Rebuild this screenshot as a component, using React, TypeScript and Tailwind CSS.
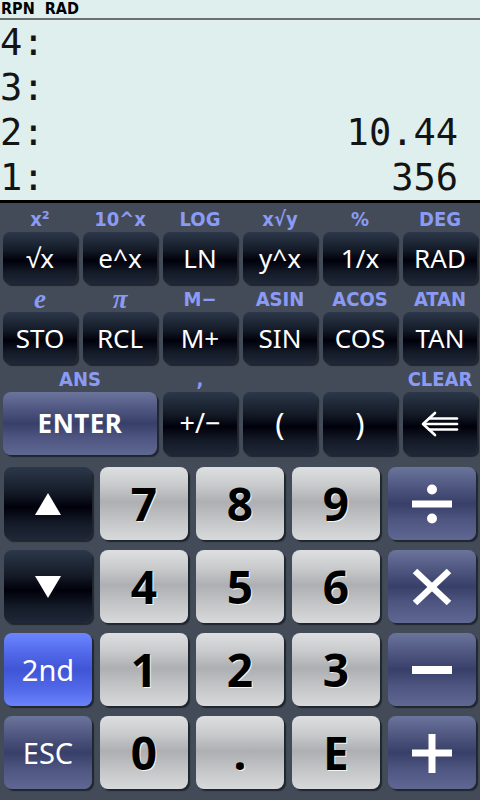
import React from 'react';

const stack = [
  ['4', ''],
  ['3', ''],
  ['2', '10.44'],
  ['1', '356'],
];

const darkKey =
  "bg-[linear-gradient(to_bottom,#2c384a_0%,#141b27_35%,#00000a_55%,#141b28_78%,#1f2838_100%)] text-white shadow-[2px_2px_1px_rgba(10,14,20,0.6)]";
const blueKey =
  "bg-[linear-gradient(to_bottom,#6b749b_0%,#4c547e_30%,#384069_50%,#4d5580_72%,#5f6892_100%)] text-white shadow-[2px_2px_1px_rgba(10,14,20,0.6)]";
const lightKey =
  "bg-[linear-gradient(to_bottom,#dedfe1_0%,#c8cacc_25%,#adafb2_48%,#c4c6c8_75%,#d8d9db_100%)] text-black shadow-[2px_2px_1px_rgba(10,14,20,0.6)]";
const secondKey =
  "bg-[linear-gradient(to_bottom,#6c86ff_0%,#5168ea_28%,#3f55d5_50%,#5068e8_75%,#6a82fa_100%)] text-white shadow-[2px_2px_1px_rgba(10,14,20,0.6)]";

const labelFont = "font-['DejaVu_Sans_Condensed','DejaVu_Sans',sans-serif]";
const keyFont = "font-['Noto_Sans','Open_Sans',sans-serif]";

const fnRows = [
  [
    { label: 'x²', key: '√x' },
    { label: '10^x', key: 'e^x' },
    { label: 'LOG', key: 'LN' },
    { label: 'x√y', key: 'y^x' },
    { label: '%', key: '1/x' },
    { label: 'DEG', key: 'RAD' },
  ],
  [
    { label: 'e', key: 'STO', serif: true },
    { label: 'π', key: 'RCL', serif: true },
    { label: 'M−', key: 'M+' },
    { label: 'ASIN', key: 'SIN' },
    { label: 'ACOS', key: 'COS' },
    { label: 'ATAN', key: 'TAN' },
  ],
];

function Label({ text, serif, first }: { text: string; serif?: boolean; first?: boolean }) {
  return (
    <div className={`${first ? 'h-[29px]' : 'h-[28px]'} flex items-end justify-center pb-[3px]`}>
      {serif ? (
        <span className="text-[27px] leading-[20px] font-bold italic text-[#8b9bf5] font-['Liberation_Serif','DejaVu_Serif',serif]">
          {text}
        </span>
      ) : (
        <span className={`text-[20px] leading-[19px] font-bold text-[#8b9bf5] ${labelFont}`}>{text}</span>
      )}
    </div>
  );
}

function Triangle({ down }: { down?: boolean }) {
  return (
    <svg width="26" height="24" viewBox="0 0 26 24">
      <polygon points={down ? '0,1 26,1 13,23' : '13,1 26,23 0,23'} fill="white" />
    </svg>
  );
}

function OpIcon({ op }: { op: string }) {
  return (
    <svg width="44" height="44" viewBox="-22 -22 44 44" fill="white" stroke="white">
      {op === 'div' && (
        <>
          <rect x="-20" y="-3.5" width="40" height="7" stroke="none" />
          <circle cx="0" cy="-14.5" r="5" stroke="none" />
          <circle cx="0" cy="14.5" r="5" stroke="none" />
        </>
      )}
      {op === 'mul' && (
        <>
          <line x1="-17" y1="-16" x2="17" y2="16" strokeWidth="6.5" />
          <line x1="17" y1="-16" x2="-17" y2="16" strokeWidth="6.5" />
        </>
      )}
      {op === 'sub' && <rect x="-20" y="-4" width="40" height="8" stroke="none" />}
      {op === 'add' && (
        <>
          <rect x="-20" y="-3.5" width="40" height="7" stroke="none" />
          <rect x="-3.5" y="-19" width="7" height="39" stroke="none" />
        </>
      )}
    </svg>
  );
}

function BackArrow() {
  return (
    <svg width="38" height="26" viewBox="0 0 38 26" fill="none" stroke="white" strokeWidth="2.6" strokeLinecap="round">
      <polyline points="14,2 2,13 14,24" strokeLinejoin="round" />
      <line x1="8" y1="7.5" x2="36" y2="7.5" />
      <line x1="4" y1="13" x2="36" y2="13" />
      <line x1="8" y1="18.5" x2="36" y2="18.5" />
    </svg>
  );
}

type NumKey = { kind: 'dark' | 'light' | 'blue' | 'second'; content: React.ReactNode };

const numRows: NumKey[][] = [
  [
    { kind: 'dark', content: <Triangle /> },
    { kind: 'light', content: '7' },
    { kind: 'light', content: '8' },
    { kind: 'light', content: '9' },
    { kind: 'blue', content: <OpIcon op="div" /> },
  ],
  [
    { kind: 'dark', content: <Triangle down /> },
    { kind: 'light', content: '4' },
    { kind: 'light', content: '5' },
    { kind: 'light', content: '6' },
    { kind: 'blue', content: <OpIcon op="mul" /> },
  ],
  [
    { kind: 'second', content: '2nd' },
    { kind: 'light', content: '1' },
    { kind: 'light', content: '2' },
    { kind: 'light', content: '3' },
    { kind: 'blue', content: <OpIcon op="sub" /> },
  ],
  [
    { kind: 'blue', content: 'ESC' },
    { kind: 'light', content: '0' },
    { kind: 'light', content: '.' },
    { kind: 'light', content: 'E' },
    { kind: 'blue', content: <OpIcon op="add" /> },
  ],
];

const kindClass = {
  dark: darkKey,
  light: lightKey,
  blue: blueKey,
  second: secondKey,
};

export default function App() {
  return (
    <div className="w-[480px] h-[800px] overflow-hidden flex flex-col bg-[#424b57]">
      {/* status line */}
      <div className={`h-[20px] shrink-0 bg-[#dfefee] border-b-2 border-[#6e6e6e] pl-[1px] text-[16px] leading-[18px] font-bold text-black ${labelFont}`}>
        RPN&nbsp;&nbsp;RAD
      </div>

      {/* stack display */}
      <div className="shrink-0 bg-[#dfefee] border-b-[3px] border-black font-['DejaVu_Sans_Mono','Liberation_Mono',monospace] text-[37px] leading-[45px] text-[#141414]">
        {stack.map(([n, v]) => (
          <div key={n} className="h-[45px] flex justify-between pr-[22px]">
            <span>{n}:</span>
            <span>{v}</span>
          </div>
        ))}
      </div>

      {/* function keys */}
      <div className="flex flex-col">
        {fnRows.map((row, r) => (
          <div key={r} className="grid grid-cols-6">
            {row.map((k) => (
              <div key={k.key} className="flex flex-col">
                <Label text={k.label} serif={k.serif} first={r === 0} />
                <div className="px-[3px]">
                  <button className={`w-full h-[52px] rounded-[7px] flex items-center justify-center text-[26px] ${keyFont} ${darkKey}`}>
                    {k.key}
                  </button>
                </div>
              </div>
            ))}
          </div>
        ))}

        <div className="grid grid-cols-6">
          <div className="col-span-2 flex flex-col">
            <Label text="ANS" />
            <div className="px-[3px]">
              <button className={`w-full h-[63px] rounded-[8px] flex items-center justify-center text-[26px] font-bold tracking-[0.5px] ${keyFont} ${blueKey}`}>
                ENTER
              </button>
            </div>
          </div>
          {[
            { label: ',', content: '+/−' as React.ReactNode },
            { label: '', content: '(' as React.ReactNode },
            { label: '', content: ')' as React.ReactNode },
            { label: 'CLEAR', content: <BackArrow /> },
          ].map((k, i) => (
            <div key={i} className="flex flex-col">
              <Label text={k.label} />
              <div className="px-[3px]">
                <button className={`w-full h-[63px] rounded-[7px] flex items-center justify-center ${i === 0 ? 'text-[27px]' : 'text-[31px]'} ${keyFont} ${darkKey}`}>
                  {k.content}
                </button>
              </div>
            </div>
          ))}
        </div>
      </div>

      {/* numeric keys */}
      <div className="grid grid-cols-5 gap-y-[10px] pt-[12px]">
        {numRows.flat().map((k, i) => (
          <div key={i} className="px-[4px]">
            <button
              className={`w-full h-[73px] rounded-[8px] flex items-center justify-center ${keyFont} ${kindClass[k.kind]} ${
                k.kind === 'light'
                  ? 'text-[46px] font-bold [text-shadow:1px_1px_0_#f4f4f4]'
                  : 'text-[29px]'
              }`}
            >
              {k.content}
            </button>
          </div>
        ))}
      </div>
    </div>
  );
}
